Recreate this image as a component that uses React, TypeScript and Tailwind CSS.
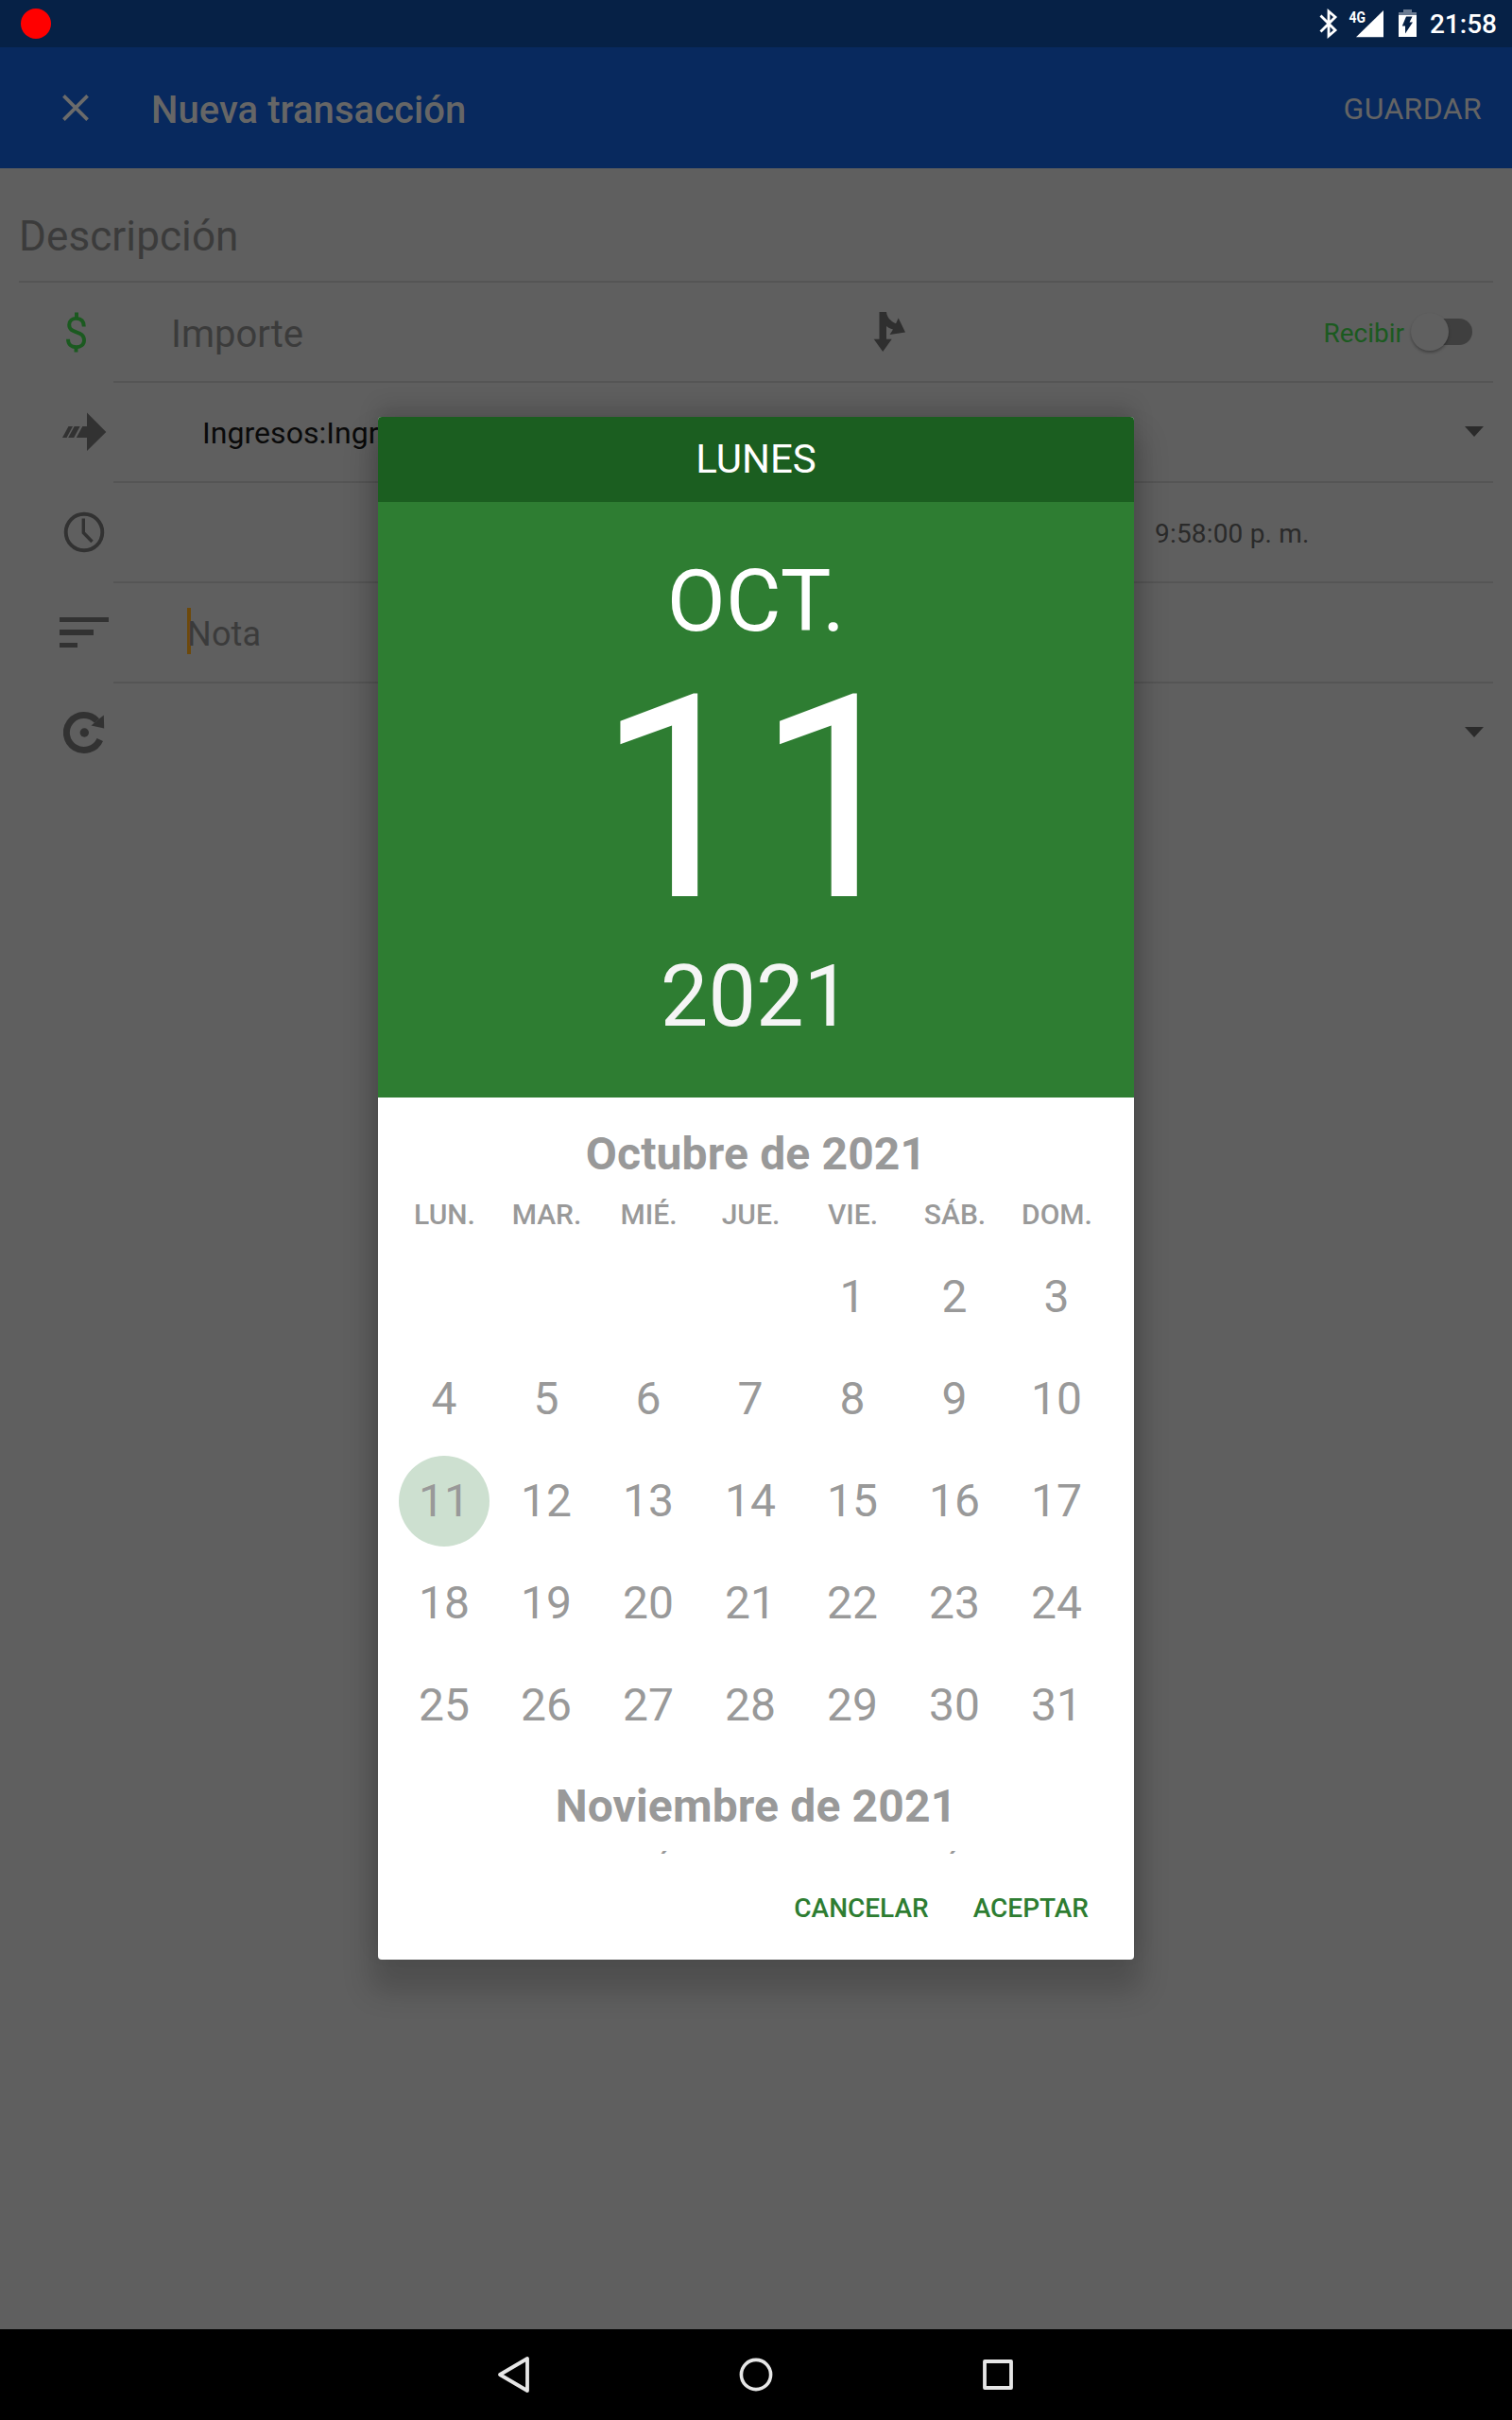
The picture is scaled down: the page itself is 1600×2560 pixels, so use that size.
import type { ReactNode } from 'react';

const weekdays = ['LUN.', 'MAR.', 'MIÉ.', 'JUE.', 'VIE.', 'SÁB.', 'DOM.'];

function StatusBar() {
  return (
    <div className="flex h-[50px] items-center bg-[#062146] pr-4 pl-[22px]">
      <span className="h-8 w-8 rounded-full bg-[#ff0000]" />
      <div className="ml-auto flex items-center text-white">
        <svg className="block" width="20" height="50" viewBox="0 0 20 50" fill="none" stroke="#fff" strokeWidth="2.8">
          <path d="M1.5 16.500 17 32 10 38V12l7 6L1.500 33.500" strokeLinejoin="miter" />
        </svg>
        <svg className="ml-[11px] block" width="38" height="50" viewBox="0 0 38 50" fill="#fff">
          <path d="M8 39.300H37V11Z" />
          <text x="0.5" y="23.700" fontFamily="Roboto" fontWeight="700" fontSize="16.500" textLength="17.500" lengthAdjust="spacingAndGlyphs">
            4G
          </text>
        </svg>
        <svg className="ml-[15px] block" width="19" height="50" viewBox="0 0 19 50">
          <path d="M0 16V13H5V10H14V13H19V16Z" fill="#6a7a91" />
          <path d="M0 16H19V39H0Z" fill="#fff" />
          <path d="M8 17.500H14.500L11.500 23.500H15L7 35.500V27.500H3.800Z" fill="#062146" />
        </svg>
        <span className="ml-[14px] pt-0.5 text-[28px] leading-[50px] font-medium">21:58</span>
      </div>
    </div>
  );
}

function AppBar() {
  return (
    <div className="flex h-32 items-center bg-[#08295e] pr-8 pl-[66px] text-[#666]">
      <svg className="block" width="28" height="28" viewBox="0 0 28 28" stroke="#6b6b6b" strokeWidth="3.700">
        <path d="M1.400 1.400 26.600 26.600M26.600 1.400 1.400 26.600" />
      </svg>
      <h1 className="ml-[66px] pt-[5px] text-[40px] leading-[48px] font-medium tracking-[0.050px]">Nueva transacción</h1>
      <span className="ml-auto pt-0.5 text-[32px] leading-[40px] tracking-[0.350px] text-[#646464]">GUARDAR</span>
    </div>
  );
}

function Row({ icon, children, last }: { icon: ReactNode; children?: ReactNode; last?: boolean }) {
  return (
    <div className="flex h-[106px] pr-5">
      <div className="flex w-[120px] items-center pb-0.5">{icon}</div>
      <div className={last ? 'flex flex-1 items-center pb-0.5' : 'flex flex-1 items-center border-b-2 border-[#555]'}>{children}</div>
    </div>
  );
}

function Caret() {
  return (
    <svg className="mr-2.5 ml-auto block" width="20" height="12" viewBox="0 0 20 12" fill="#2b2b2b">
      <path d="M0 0H20L10 11Z" />
    </svg>
  );
}

const DollarIcon = () => (
  <svg className="mt-0.5 ml-[69px] block" width="24" height="44" viewBox="0 0 24 44" fill="none" stroke="#1b5a20" strokeWidth="3.900">
    <path d="M12 .5V7M11.500 37V42.500" />
    <path d="M19.800 15.500C19.800 9.500 16.500 6.900 11.800 6.900 7.300 6.900 4.200 9.600 4.200 13.600 4.200 24 20 18.500 20 30 20 34.500 16.500 37.200 11.500 37.200 6.500 37.200 3 34.500 3 28.800" />
  </svg>
);

const TransferIcon = () => (
  <svg className="ml-[65px] block" width="48" height="42" viewBox="0 0 48 42" fill="#323232">
    <path d="M1 27 7.500 15H12L5.500 27ZM7.200 27 13.700 15H19.700L13.200 27ZM15.800 27 22.300 15H27V.500L47.300 21 27 41V27Z" />
  </svg>
);

const ClockIcon = () => (
  <svg className="ml-[67px] block" width="44" height="44" viewBox="0 0 44 44" fill="none" stroke="#323232">
    <circle cx="22" cy="22" r="19.300" strokeWidth="3.900" />
    <path d="M21.300 7.500V22.500L30.500 32" strokeWidth="3.400" />
  </svg>
);

const NotesIcon = () => (
  <div className="ml-[63px] flex flex-col gap-[8px]">
    <span className="h-[5.500px] w-[52px] bg-[#323232]" />
    <span className="h-[5.500px] w-9 bg-[#323232]" />
    <span className="h-[5.500px] w-[19px] bg-[#323232]" />
  </div>
);

const RepeatIcon = () => (
  <svg className="ml-[67px] block" width="44" height="46" viewBox="0 0 44 46">
    <path d="M38.800 30.500A18.500 18.500 0 1 1 35.500 10.500" fill="none" stroke="#323232" strokeWidth="7" />
    <path d="M29.500 15.500 42.800 4.500 43.200 18.500Z" fill="#323232" />
    <circle cx="22.300" cy="23" r="4.700" fill="#323232" />
  </svg>
);

const SplitIcon = () => (
  <svg className="block" width="36" height="44" viewBox="0 0 36 44" fill="#2f2f2f">
    <path d="M6.500 1H14C14.500 6.500 18 10.500 24 13.200L26.700 7.500 34 22.500 17.500 25 21 19.500C18 18.800 15.500 17.500 14 16V29.700H19.700L10.200 43 .700 29.700H6.500Z" />
  </svg>
);

function TransactionForm() {
  return (
    <div className="flex-1 bg-[#5f5f5f]">
      <div className="mr-5 ml-5 flex h-[121px] border-b-2 border-[#555] pt-[46px] text-[44px] leading-[52px] tracking-[0.100px] text-[#3b3b3b]">
        Descripción
      </div>
      <Row icon={<DollarIcon />}>
        <span className="ml-[61px] w-[743px] pt-[5px] text-[40px] leading-[48px] text-[#3b3b3b]">Importe</span>
        <SplitIcon />
        <span className="ml-auto pt-[3px] text-[28px] leading-[34px] text-[#1b5a20]">Recibir</span>
        <div className="mr-[22px] ml-[7px] flex h-10 w-[65px] items-center">
          <span className="z-10 h-10 w-10 rounded-full bg-[#606060] shadow-[0_2px_3px_rgba(0,0,0,0.3)]" />
          <span className="-ml-9 h-7 w-[61px] rounded-full bg-[#3f3f3f]" />
        </div>
      </Row>
      <Row icon={<TransferIcon />}>
        <span className="ml-[94px] pt-0.5 text-[32px] leading-[40px] tracking-[0.050px] text-[#0a0a0a]">Ingresos:Ingresos</span>
        <Caret />
      </Row>
      <Row icon={<ClockIcon />}>
        <span className="ml-[1102px] pt-[3px] text-[28px] leading-[34px] tracking-[0.180px] text-[#2a2a2a]">9:58:00 p. m.</span>
      </Row>
      <Row icon={<NotesIcon />}>
        <span className="-mt-1 ml-[78px] h-[49px] w-1 bg-[#6d490b]" />
        <span className="-ml-1 pt-1 text-[36px] leading-[42px] tracking-[0.200px] text-[#3b3b3b]">Nota</span>
      </Row>
      <Row icon={<RepeatIcon />} last>
        <Caret />
      </Row>
    </div>
  );
}

function Month({ title, offset, days, selected }: { title: string; offset: number; days: number; selected?: number }) {
  return (
    <section className="h-[690px] shrink-0 pr-7 pl-4">
      <h2 className="pt-8 pl-3 text-center text-[48px] leading-[56px] font-bold tracking-[0.150px]">{title}</h2>
      <div className="grid grid-cols-7 pt-[16px] text-center text-[30px] leading-[40px] font-medium">
        {weekdays.map((d) => (
          <span key={d} className="pl-px">
            {d}
          </span>
        ))}
      </div>
      <div className="grid grid-cols-7 pt-[13px]">
        {Array.from({ length: offset }, (_, i) => (
          <span key={`blank-${i}`} />
        ))}
        {Array.from({ length: days }, (_, i) => i + 1).map((d) => (
          <div key={d} className="flex h-[108px] items-center justify-center text-[48px]">
            <span
              className={
                d === selected
                  ? 'flex h-24 w-24 items-center justify-center rounded-full bg-[#cde0d0]'
                  : 'flex h-24 w-24 items-center justify-center'
              }
            >
              {d}
            </span>
          </div>
        ))}
      </div>
    </section>
  );
}

function DatePickerDialog() {
  return (
    <div className="absolute top-[441px] left-[400px] flex h-[1632px] w-[800px] flex-col overflow-hidden rounded-[4px] bg-white shadow-[0_26px_30px_8px_rgba(0,0,0,0.18),0_-12px_22px_rgba(0,0,0,0.13)]">
      <div className="h-[90px] bg-[#1b5e20] text-center text-[42px] leading-[90px] text-white">LUNES</div>
      <div className="flex h-[630px] flex-col items-center bg-[#2e7d32] text-white">
        <span className="mt-[53px] text-[90px] leading-[106px] tracking-[0.400px]">OCT.</span>
        <span className="mt-[6px] text-[300px] leading-[300px]">11</span>
        <span className="mt-[6px] text-[90px] leading-[106px] text-[#f5f5f5]">2021</span>
      </div>
      <div className="flex h-[800px] flex-col overflow-hidden text-[#999]">
        <Month title="Octubre de 2021" offset={4} days={31} selected={11} />
        <Month title="Noviembre de 2021" offset={0} days={0} />
      </div>
      <div className="flex h-28 justify-end gap-[47px] pt-[41px] pr-12 text-[28px] leading-[34px] font-medium text-[#2e7d32]">
        <span>CANCELAR</span>
        <span>ACEPTAR</span>
      </div>
    </div>
  );
}

function NavigationBar() {
  return (
    <div className="flex h-24 items-center justify-center gap-[216px] bg-black">
      <svg className="block" width="40" height="40" viewBox="0 0 40 40" fill="none" stroke="#e6e6e6" strokeWidth="3.800" strokeLinejoin="round">
        <path d="M34 3V37L5 20Z" />
      </svg>
      <svg className="block" width="40" height="40" viewBox="0 0 40 40" fill="none" stroke="#e6e6e6" strokeWidth="3.600">
        <circle cx="20" cy="20" r="15.600" />
      </svg>
      <svg className="block" width="40" height="40" viewBox="0 0 40 40" fill="none" stroke="#e6e6e6" strokeWidth="3.800" strokeLinejoin="round">
        <path d="M6 6H34V34H6Z" />
      </svg>
    </div>
  );
}

export default function App() {
  return (
    <div className="relative flex h-[2560px] w-[1600px] flex-col overflow-hidden font-[Roboto,sans-serif]">
      <StatusBar />
      <AppBar />
      <TransactionForm />
      <NavigationBar />
      <DatePickerDialog />
    </div>
  );
}
